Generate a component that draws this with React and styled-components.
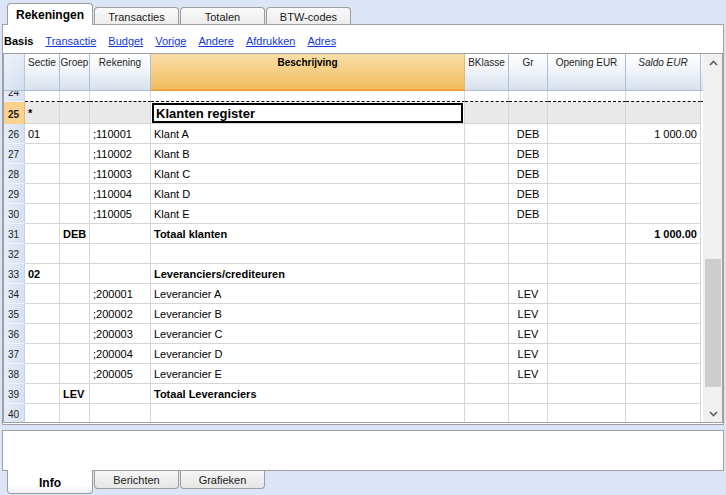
import React from "react";
import styled, { createGlobalStyle, css } from "styled-components";

const GlobalStyle = createGlobalStyle`
  html, body {
    margin: 0;
    padding: 0;
    background: #dbe5f7;
    font-family: "Liberation Sans", Arial, sans-serif;
    font-size: 11px;
    color: #000;
  }
`;

const COLS = [21, 35, 30, 61, 314, 44, 39, 78, 75];
const TEMPLATE = COLS.map((w) => `${w}px`).join(" ") + " 2px";

const topTabs = ["Rekeningen", "Transacties", "Totalen", "BTW-codes"];
const links = ["Transactie", "Budget", "Vorige", "Andere", "Afdrukken", "Adres"];
const bottomTabs = ["Info", "Berichten", "Grafieken"];

const headers = [
  { label: "" },
  { label: "Sectie" },
  { label: "Groep" },
  { label: "Rekening" },
  { label: "Beschrijving", bold: true, active: true },
  { label: "BKlasse" },
  { label: "Gr" },
  { label: "Opening EUR" },
  { label: "Saldo EUR", italic: true },
];

// sectie, groep, rekening, beschrijving, bklasse, gr, opening, saldo
const rows = [
  { n: 24, cells: [], dashed: true },
  { n: 25, cells: ["*"], current: true, edit: "Klanten register" },
  { n: 26, cells: ["01", "", ";110001", "Klant A", "", "DEB", "", "1 000.00"] },
  { n: 27, cells: ["", "", ";110002", "Klant B", "", "DEB"] },
  { n: 28, cells: ["", "", ";110003", "Klant C", "", "DEB"] },
  { n: 29, cells: ["", "", ";110004", "Klant D", "", "DEB"] },
  { n: 30, cells: ["", "", ";110005", "Klant E", "", "DEB"] },
  { n: 31, cells: ["", "DEB", "", "Totaal klanten", "", "", "", "1 000.00"], bold: true },
  { n: 32, cells: [] },
  { n: 33, cells: ["02", "", "", "Leveranciers/crediteuren"], bold: true },
  { n: 34, cells: ["", "", ";200001", "Leverancier A", "", "LEV"] },
  { n: 35, cells: ["", "", ";200002", "Leverancier B", "", "LEV"] },
  { n: 36, cells: ["", "", ";200003", "Leverancier C", "", "LEV"] },
  { n: 37, cells: ["", "", ";200004", "Leverancier D", "", "LEV"] },
  { n: 38, cells: ["", "", ";200005", "Leverancier E", "", "LEV"] },
  { n: 39, cells: ["", "LEV", "", "Totaal Leveranciers"], bold: true },
  { n: 40, cells: [] },
];

// column alignment for data cells
const ALIGN = ["left", "left", "left", "left", "left", "center", "right", "right"];

export default function App() {
  return (
    <>
      <GlobalStyle />
      <Page>
        <TabBar>
          {topTabs.map((t, i) => (
            <TopTab key={t} active={i === 0}>
              {t}
            </TopTab>
          ))}
        </TabBar>

        <Panel>
          <SubNav>
            <strong>Basis</strong>
            {links.map((l) => (
              <NavLink key={l} href="#">
                {l}
              </NavLink>
            ))}
          </SubNav>

          <GridBox>
            <GridMain>
              <HeaderRow>
                {headers.map((h, i) => (
                  <HeadCell
                    key={i}
                    corner={i === 0}
                    active={h.active}
                    bold={h.bold}
                    italic={h.italic}
                  >
                    {h.label}
                  </HeadCell>
                ))}
                <HeadFill />
              </HeaderRow>

              <Body>
                {rows.map((r, idx) => (
                  <Row key={r.n} first={idx === 0} tall={r.current}>
                    <NumCell current={r.current}>{r.n}</NumCell>
                    {ALIGN.map((a, ci) =>
                      r.edit && ci === 3 ? (
                        <Cell key={ci} dashed={r.dashed}>
                          <EditBox>{r.edit}</EditBox>
                        </Cell>
                      ) : (
                        <Cell
                          key={ci}
                          align={a}
                          bold={r.bold || (r.current && ci === 0)}
                          grey={r.current}
                          dashed={r.dashed}
                        >
                          {r.cells[ci] || ""}
                        </Cell>
                      )
                    )}
                    <Fill dashed={r.dashed} />
                  </Row>
                ))}
              </Body>
            </GridMain>

            <ScrollBar>
              <Arrow>
                <svg width="9" height="6" viewBox="0 0 9 6">
                  <polyline points="1,5 4.5,1.5 8,5" fill="none" stroke="#606060" strokeWidth="1.6" />
                </svg>
              </Arrow>
              <Track>
                <Thumb />
              </Track>
              <Arrow>
                <svg width="9" height="6" viewBox="0 0 9 6">
                  <polyline points="1,1 4.5,4.5 8,1" fill="none" stroke="#606060" strokeWidth="1.6" />
                </svg>
              </Arrow>
            </ScrollBar>
          </GridBox>
        </Panel>

        <InfoPanel />

        <BottomTabBar>
          {bottomTabs.map((t, i) => (
            <BottomTab key={t} active={i === 0}>
              {t}
            </BottomTab>
          ))}
        </BottomTabBar>
      </Page>
    </>
  );
}

const Page = styled.div`
  width: 726px;
  height: 495px;
  overflow: hidden;
`;

const TabBar = styled.div`
  display: flex;
  align-items: flex-end;
  gap: 1px;
  height: 24px;
  padding-left: 7px;
  position: relative;
  z-index: 2;
`;

const TopTab = styled.div`
  box-sizing: border-box;
  width: 85px;
  height: 17px;
  border: 1px solid #9d9d9d;
  border-bottom: none;
  border-radius: 4px 4px 0 0;
  background: linear-gradient(#fafafa, #ececec);
  font-size: 11px;
  color: #1a1a1a;
  display: flex;
  align-items: center;
  justify-content: center;
  padding-top: 1px;
  ${(p) =>
    p.active &&
    css`
      width: 86px;
      height: 22px;
      margin-bottom: -1px;
      background: #fff;
      font-weight: bold;
      font-size: 12px;
      color: #000;
      padding-top: 0;
    `}
`;

const Panel = styled.div`
  box-sizing: border-box;
  margin-left: 2px;
  width: 722px;
  height: 401px;
  border: 1px solid #a0a0a0;
  background: #fff;
  display: flex;
  flex-direction: column;
`;

const SubNav = styled.div`
  height: 28px;
  display: flex;
  align-items: center;
  gap: 12px;
  padding-left: 1px;
  padding-top: 4px;
  box-sizing: border-box;
  strong {
    font-weight: bold;
  }
`;

const NavLink = styled.a`
  color: #1538d8;
  text-decoration: underline;
`;

const GridBox = styled.div`
  box-sizing: border-box;
  width: 720px;
  height: 370px;
  border: 1px solid #a0a0a0;
  display: flex;
`;

const GridMain = styled.div`
  width: 699px;
  display: flex;
  flex-direction: column;
`;

const HeaderRow = styled.div`
  display: grid;
  grid-template-columns: ${TEMPLATE};
  height: 37px;
`;

const HeadCell = styled.div`
  box-sizing: border-box;
  border-right: 1px solid #a9bdd6;
  border-bottom: 1px solid #a9bdd6;
  background: linear-gradient(#ffffff 0%, #f1f4f9 45%, #d7e0ec 100%);
  font-size: 10px;
  color: #1e1e1e;
  text-align: center;
  padding-top: 3px;
  white-space: nowrap;
  font-weight: ${(p) => (p.bold ? "bold" : "normal")};
  font-style: ${(p) => (p.italic ? "italic" : "normal")};
  ${(p) =>
    p.active &&
    css`
      background: linear-gradient(#f9dfa8, #f3bd60);
      border-right-color: #e9b870;
      border-bottom: 2px solid #f0a13c;
      color: #000;
    `}
  ${(p) =>
    p.corner &&
    css`
      background: linear-gradient(135deg, #eef3fa 0%, #d3dfef 100%);
      border-right-color: #b7c8de;
    `}
`;

const HeadFill = styled.div`
  border-bottom: 1px solid #a9bdd6;
  background: linear-gradient(#ffffff 0%, #f1f4f9 45%, #d7e0ec 100%);
`;

const Body = styled.div`
  flex: 1;
  overflow: hidden;
`;

const Row = styled.div`
  display: grid;
  grid-template-columns: ${TEMPLATE};
  height: ${(p) => (p.tall ? 22 : 20)}px;
  margin-top: ${(p) => (p.first ? -9 : 0)}px;
`;

const NumCell = styled.div`
  box-sizing: border-box;
  background: ${(p) => (p.current ? "#fbd28d" : "linear-gradient(90deg, #e6edf8, #d6e1f1)")};
  border-right: 1px solid ${(p) => (p.current ? "#f2b866" : "#c3d2e6")};
  border-bottom: 1px solid ${(p) => (p.current ? "#fbd28d" : "#eef3fa")};
  font-size: 10px;
  font-weight: ${(p) => (p.current ? "bold" : "normal")};
  display: flex;
  align-items: flex-end;
  padding: 0 0 3px 4px;
  color: #222;
`;

const Cell = styled.div`
  box-sizing: border-box;
  border-right: 1px solid #d6d6d6;
  border-bottom: 1px ${(p) => (p.dashed ? "dashed #000" : "solid #d6d6d6")};
  background: ${(p) => (p.grey ? "#e9e9e9" : "#fff")};
  padding: 0 3px;
  display: flex;
  align-items: center;
  justify-content: ${(p) =>
    p.align === "right" ? "flex-end" : p.align === "center" ? "center" : "flex-start"};
  font-weight: ${(p) => (p.bold ? "bold" : "normal")};
  white-space: nowrap;
  overflow: hidden;
`;

const EditBox = styled.div`
  flex: 1;
  align-self: stretch;
  margin: 1px -2px 0 -2px;
  border: 2px solid #000;
  background: #fff;
  font-size: 13px;
  font-weight: bold;
  display: flex;
  align-items: center;
  padding-left: 2px;
`;

const Fill = styled.div`
  border-bottom: 1px ${(p) => (p.dashed ? "dashed #000" : "solid transparent")};
`;

const ScrollBar = styled.div`
  width: 19px;
  background: #f0f0f0;
  display: flex;
  flex-direction: column;
  padding: 0 1px 0 2px;
  box-sizing: border-box;
`;

const Arrow = styled.div`
  height: 17px;
  display: flex;
  align-items: center;
  justify-content: center;
`;

const Track = styled.div`
  flex: 1;
  display: flex;
  flex-direction: column;
  padding-top: 188px;
`;

const Thumb = styled.div`
  height: 128px;
  background: #cdcdcd;
`;

const InfoPanel = styled.div`
  box-sizing: border-box;
  margin: 5px 0 0 2px;
  width: 722px;
  height: 41px;
  border: 1px solid #a0a0a0;
  background: #fff;
`;

const BottomTabBar = styled.div`
  display: flex;
  align-items: flex-start;
  gap: 1px;
  padding-left: 7px;
`;

const BottomTab = styled.div`
  box-sizing: border-box;
  width: 85px;
  height: 18px;
  border: 1px solid #9d9d9d;
  border-top: none;
  border-radius: 0 0 4px 4px;
  background: linear-gradient(#f6f6f6, #e6e6e6);
  font-size: 11px;
  color: #1a1a1a;
  display: flex;
  align-items: center;
  justify-content: center;
  ${(p) =>
    p.active &&
    css`
      width: 86px;
      height: 24px;
      margin-top: -1px;
      background: linear-gradient(#ffffff 60%, #eef1f7 100%);
      font-weight: bold;
      font-size: 12px;
      color: #000;
      padding-top: 2px;
    `}
`;
